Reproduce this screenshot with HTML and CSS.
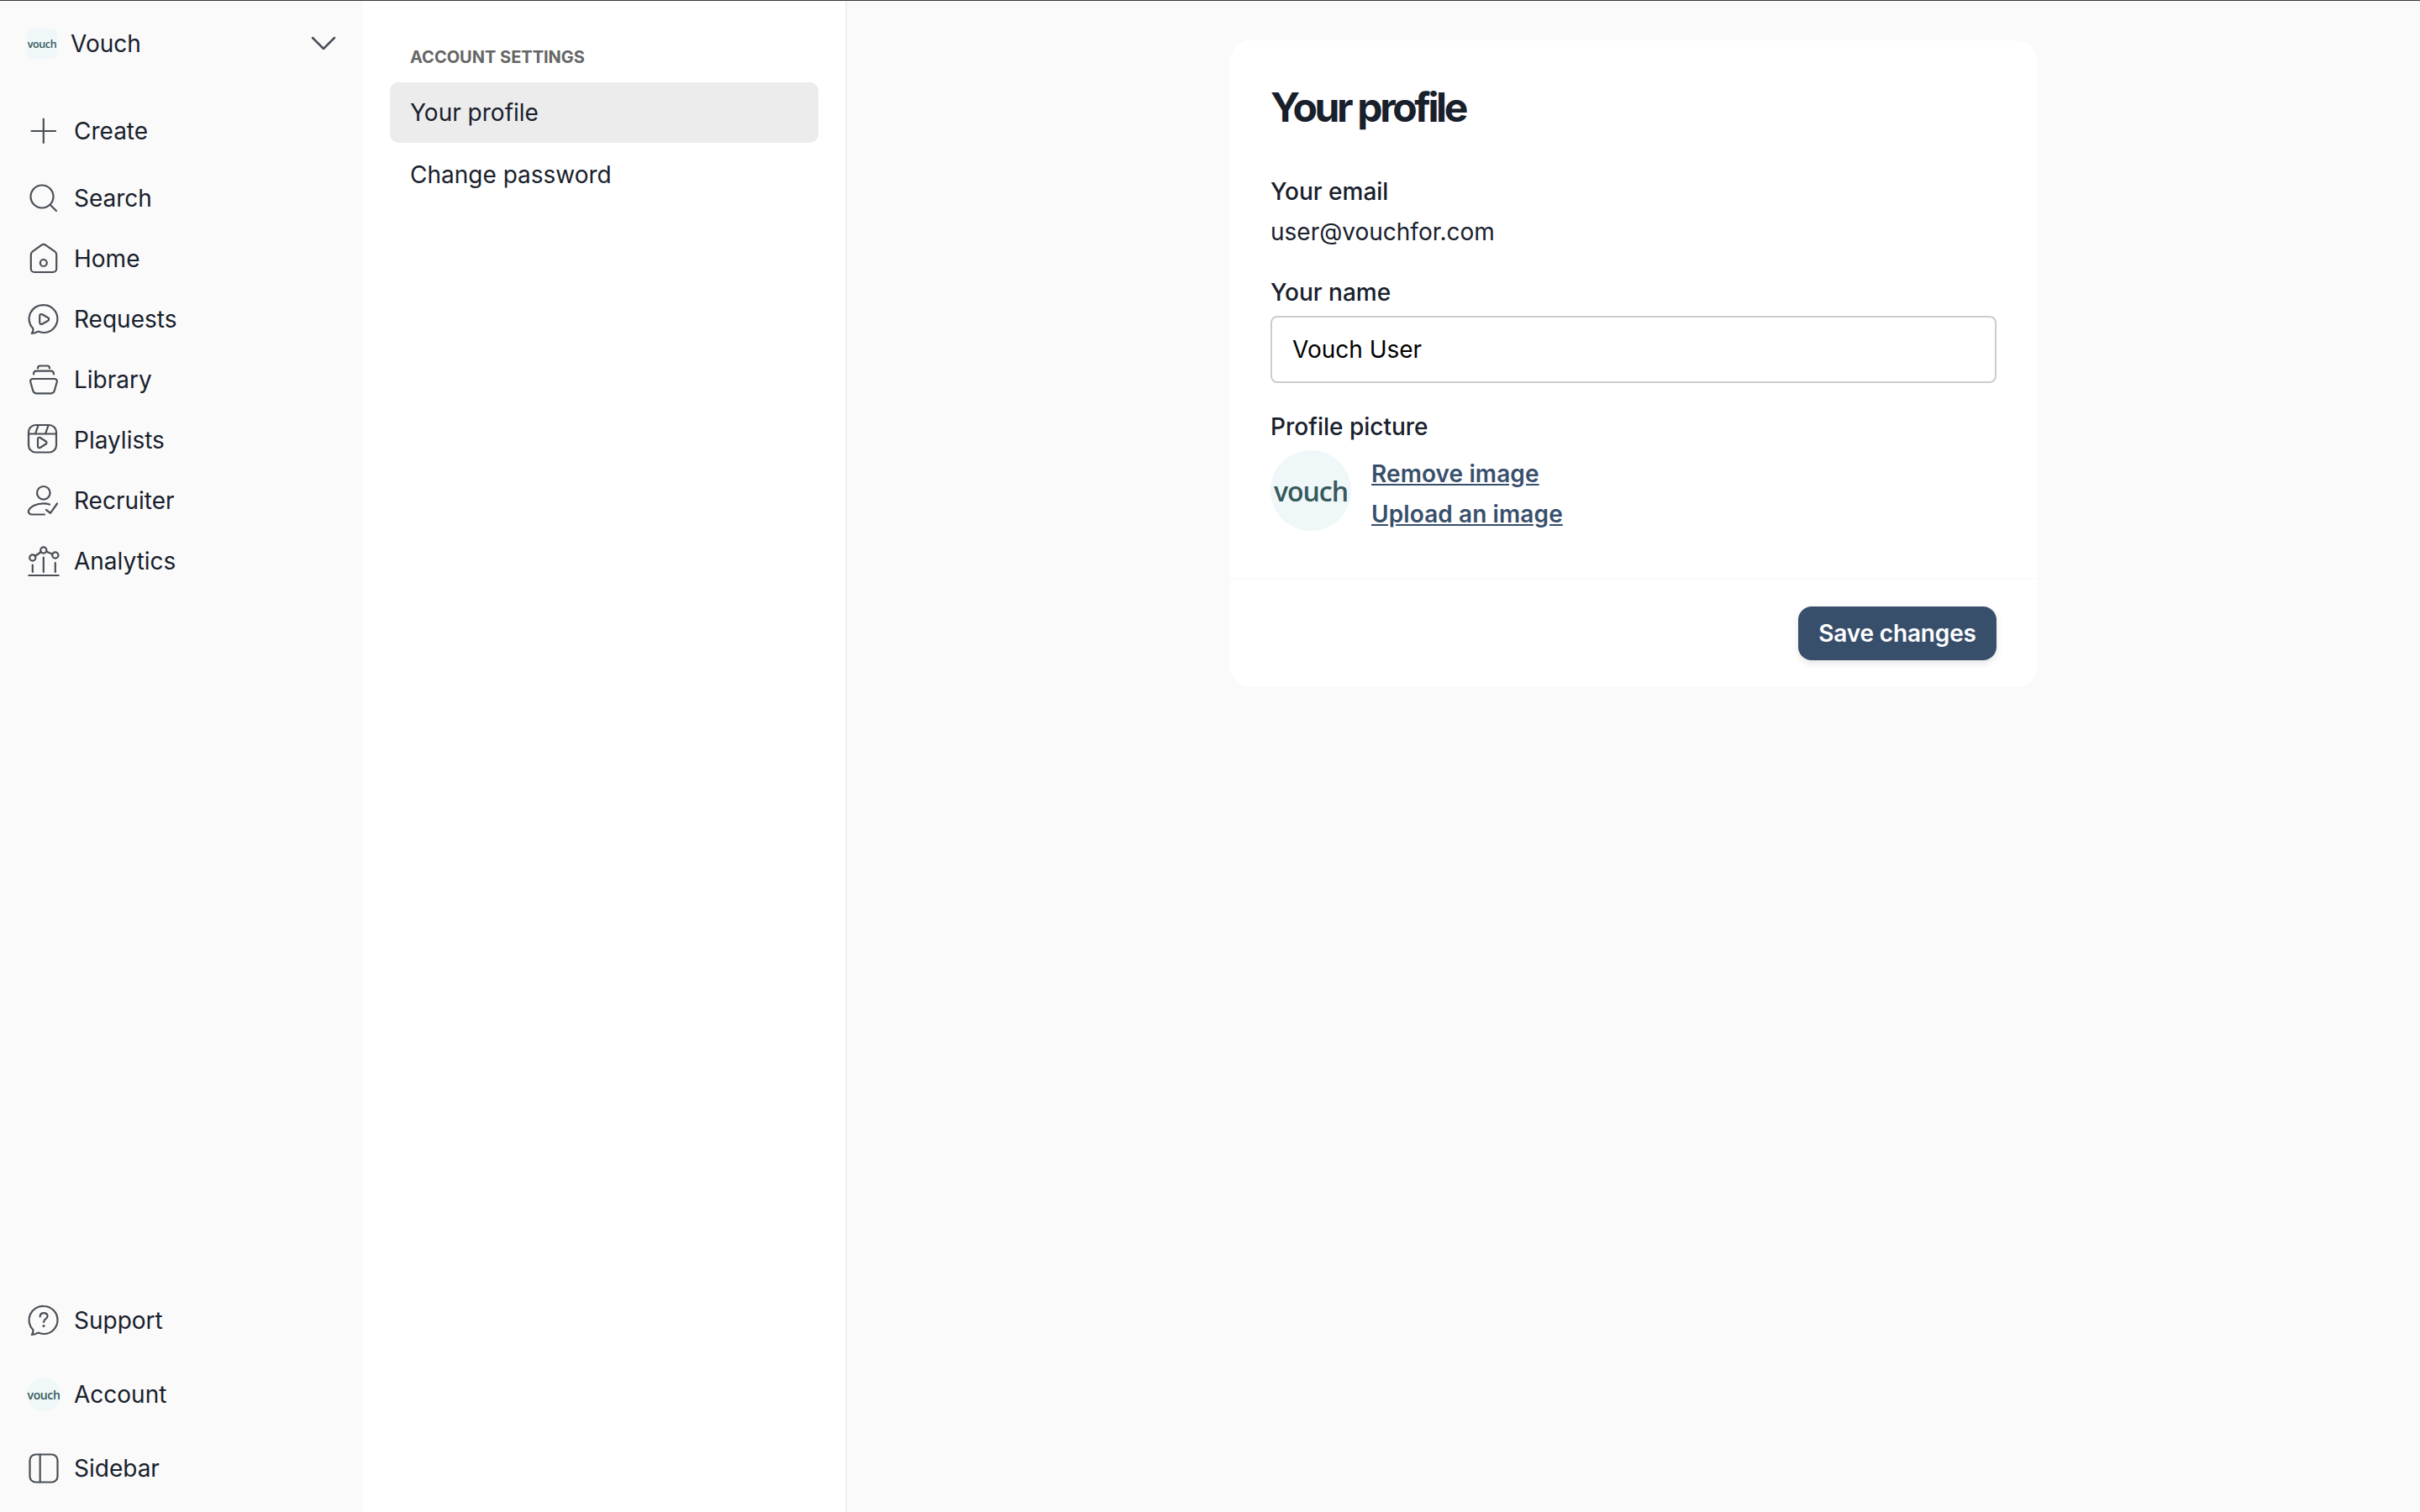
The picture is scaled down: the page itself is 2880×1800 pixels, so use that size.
FILE: index.html
```html
<!DOCTYPE html>
<html lang="en">
<head>
<meta charset="utf-8">
<title>Your profile</title>
<link rel="stylesheet" href="styles.css">
</head>
<body>
<div class="app">
  <aside class="sidebar">
    <div class="brand">
      <span class="logo logo-square">vouch</span>
      <span class="brand-name">Vouch</span>
      <svg class="chevron" viewBox="0 0 32 20"><path d="M3 3l13 13L29 3"/></svg>
    </div>
    <nav class="nav-top">
      <a class="nav-item nav-create"><svg class="icon" viewBox="0 0 40 40"><path d="M19.8 5.5v28.5M5.5 20H34"/></svg>Create</a>
      <div class="nav-list">
        <a class="nav-item"><svg class="icon" viewBox="0 0 40 40"><circle cx="18" cy="18" r="13.5"/><path d="M28 28l7 7"/></svg>Search</a>
        <a class="nav-item"><svg class="icon" viewBox="0 0 40 40"><path d="M17.2 3.8a4.4 4.4 0 0 1 5.2 0l10.8 7.6a4.4 4.4 0 0 1 2 3.6V32a4 4 0 0 1-4 4H8.8a4 4 0 0 1-4-4V15a4.4 4.4 0 0 1 2-3.6z"/><circle cx="19.8" cy="25" r="4"/></svg>Home</a>
        <a class="nav-item"><svg class="icon" viewBox="0 0 40 40"><path d="M20 3.2a16.4 16.4 0 0 1 0 32.8c-2.4 0-4.6-.5-6.6-1.4-2.2 1.4-4.8 2.3-7.6 2.3 1.4-1.8 2-3.7 1.6-5.7A16.4 16.4 0 0 1 20 3.2z"/><path d="M15.2 16a2 2 0 0 1 3-1.7l7 4a2 2 0 0 1 0 3.4l-7 4a2 2 0 0 1-3-1.7z"/></svg>Requests</a>
        <a class="nav-item"><svg class="icon" viewBox="0 0 40 40"><path d="M13 6.500c0-2 1-3 2.500-3h9c1.500 0 2.500 1 2.500 3M8 13.500c0-2.500 1-3.800 3.500-3.800h17c2.500 0 3.500 1.300 3.500 3.800"/><path d="M7.500 19h25c2.500 0 3.700 1.400 3.300 3.500l-3 10.500c-.6 2.200-1.800 3.300-4 3.300H11.200c-2.200 0-3.400-1.100-4-3.300l-3-10.500C3.800 20.400 5 19 7.500 19z"/></svg>Library</a>
        <a class="nav-item"><svg class="icon" viewBox="0 0 40 40"><rect x="2" y="2" width="33" height="32.500" rx="8.500"/><path d="M2 12.500h33M13.500 2.500l-3.500 10M25.500 2.500l-3.500 10"/><path d="M13 18.500a1.800 1.800 0 0 1 2.700-1.500l7 4.500a1.800 1.800 0 0 1 0 3l-7 4.500a1.800 1.800 0 0 1-2.700-1.500z"/></svg>Playlists</a>
        <a class="nav-item"><svg class="icon" viewBox="0 0 40 40"><circle cx="19.800" cy="10.800" r="7.800"/><path d="M27 24.500c-2.200-.8-4.600-1.200-7.200-1.200-8.300 0-15.800 3.800-17.800 8.600-.8 2 1.400 4.600 4 4.600H21"/><path d="M23 31l5 3.800L36 23.500"/></svg>Recruiter</a>
        <a class="nav-item"><svg class="icon" viewBox="0 0 40 40"><circle cx="19.800" cy="7" r="3.600"/><circle cx="6.800" cy="16" r="3.600"/><circle cx="33.800" cy="13" r="3.600"/><path d="M9.600 14l7.400-5M23 8.500l7.500 3.200M6.800 24.500V33M19.800 15.500V33M33.800 22V33"/><path d="M2.300 37h35.400"/></svg>Analytics</a>
      </div>
    </nav>
    <nav class="nav-bottom">
      <a class="nav-item"><svg class="icon" viewBox="0 0 40 40"><path d="M20 3a16.500 16.500 0 0 1 0 33c-2.400 0-4.600-.5-6.600-1.400-2.200 1.400-4.800 2.300-7.600 2.300 1.400-1.800 2-3.700 1.600-5.700A16.500 16.500 0 0 1 20 3z"/><path class="thin" d="M15.600 15.500c.2-2.800 2-4.400 4.500-4.400 2.600 0 4.400 1.600 4.400 3.800 0 3.300-4.500 3.300-4.500 7"/><circle class="dot" cx="20" cy="26.600" r="1.500"/></svg>Support</a>
      <a class="nav-item"><span class="logo logo-round">vouch</span>Account</a>
      <a class="nav-item"><svg class="icon" viewBox="0 0 40 40"><rect x="3.500" y="3.500" width="33" height="33" rx="7"/><path d="M15.700 3.500v33"/></svg>Sidebar</a>
    </nav>
  </aside>

  <section class="subnav">
    <h2 class="subnav-title">ACCOUNT SETTINGS</h2>
    <a class="subnav-item is-active">Your profile</a>
    <a class="subnav-item">Change password</a>
  </section>

  <main class="main">
    <form class="card">
      <div class="card-body">
        <h1 class="card-title">Your profile</h1>
        <div class="field field-first">
          <div class="label">Your email</div>
          <div class="value">user@vouchfor.com</div>
        </div>
        <div class="field">
          <label class="label" for="name">Your name</label>
          <input class="input" id="name" type="text" value="Vouch User">
        </div>
        <div class="field">
          <div class="label">Profile picture</div>
          <div class="picture">
            <span class="logo logo-avatar">vouch</span>
            <div class="picture-links">
              <a class="link">Remove image</a>
              <a class="link">Upload an image</a>
            </div>
          </div>
        </div>
      </div>
      <div class="card-footer">
        <button class="button" type="button">Save changes</button>
      </div>
    </form>
  </main>
</div>
</body>
</html>
```

FILE: styles.css
```css
* { box-sizing: border-box; }

html, body { margin: 0; height: 100%; }

body {
  font-family: Inter, "Liberation Sans", sans-serif;
  font-size: 28px;
  color: #18202c;
  background: #fafafa;
}

.app {
  display: flex;
  height: 1800px;
  border-top: 1px solid #3a3a3a;
}

.sidebar {
  flex: 0 0 432px;
  display: flex;
  flex-direction: column;
  padding: 15px 32px 16px;
  background: #fafafa;
}

.brand {
  display: flex;
  align-items: center;
  height: 72px;
  gap: 16px;
}

.brand-name { flex: 1; font-size: 28px; }

.chevron {
  width: 32px;
  height: 20px;
  margin-right: -1px;
  fill: none;
  stroke: #4a4f57;
  stroke-width: 2.500;
  stroke-linecap: round;
  stroke-linejoin: round;
}

.logo {
  display: flex;
  align-items: center;
  justify-content: center;
  flex: none;
  font-family: "Open Sans", sans-serif;
  font-weight: 600;
  color: #35595c;
  background: #eff7f9;
}

.logo-square { width: 36px; height: 36px; border-radius: 8px; font-size: 12.500px; letter-spacing: -0.4px; }
.logo-round { width: 40px; height: 40px; border-radius: 50%; font-size: 14px; letter-spacing: -0.4px; }
.logo-avatar { width: 96px; height: 96px; border-radius: 50%; font-size: 32px; letter-spacing: -1px; }

.nav-top { margin-top: 32px; flex: 1; }
.nav-list { margin-top: 8px; }

.nav-item {
  display: flex;
  align-items: center;
  height: 72px;
  gap: 16px;
  color: #18202c;
}

.nav-bottom { display: flex; flex-direction: column; gap: 16px; }

.icon {
  flex: none;
  width: 40px;
  height: 40px;
  fill: none;
  stroke: #4a4f57;
  stroke-width: 2.200;
  stroke-linecap: round;
  stroke-linejoin: round;
}

.icon .dot { fill: #4a4f57; stroke: none; }

.subnav {
  flex: 0 0 576px;
  padding: 0 32px;
  display: flex;
  flex-direction: column;
  background: #fff;
  border-right: 2px solid #efefef;
}

.subnav-title {
  margin: 52px 0 15px;
  padding-left: 24px;
  font-size: 20px;
  line-height: 30px;
  font-weight: 700;
  color: #666;
}

.subnav-item {
  display: flex;
  align-items: center;
  height: 72px;
  margin-bottom: 2px;
  padding-left: 24px;
  border-radius: 10px;
}

.subnav-item.is-active { background: #ececec; }

.main {
  flex: 1;
  display: flex;
  justify-content: center;
  align-items: flex-start;
  padding-top: 47px;
}

.card {
  width: 960px;
  background: #fff;
  border-radius: 24px;
}

.card-body { padding: 48px 48px 56px; }

.card-title {
  margin: 0;
  font-size: 48px;
  line-height: 64px;
  font-weight: 700;
  letter-spacing: -3.360px;
}

.field { margin-top: 32px; }
.field-first { margin-top: 48px; }

.label {
  display: block;
  line-height: 40px;
  font-weight: 500;
}

.value { margin-top: 8px; line-height: 40px; }

.input {
  display: block;
  width: 100%;
  height: 80px;
  margin-top: 8px;
  padding: 0 24px;
  font: inherit;
  color: #000;
  background: #fff;
  border: 2px solid #ccc;
  border-radius: 8px;
}

.picture {
  display: flex;
  align-items: flex-start;
  gap: 24px;
  height: 96px;
  margin-top: 8px;
}

.picture-links { display: flex; flex-direction: column; padding-top: 4px; }

.link {
  line-height: 48px;
  font-weight: 600;
  letter-spacing: .1px;
  color: #384f6c;
  text-decoration: underline;
}

.card-footer {
  display: flex;
  justify-content: flex-end;
  padding: 32px 48px 32px;
  border-top: 2px solid #fafafa;
}

.button {
  height: 64px;
  width: 236px;
  padding: 0;
  font: inherit;
  font-weight: 600;
  letter-spacing: -.15px;
  color: #fff;
  background: #384f6c;
  border: 0;
  border-radius: 16px;
  box-shadow: 0 4px 8px rgba(0, 0, 0, .1);
}
```
